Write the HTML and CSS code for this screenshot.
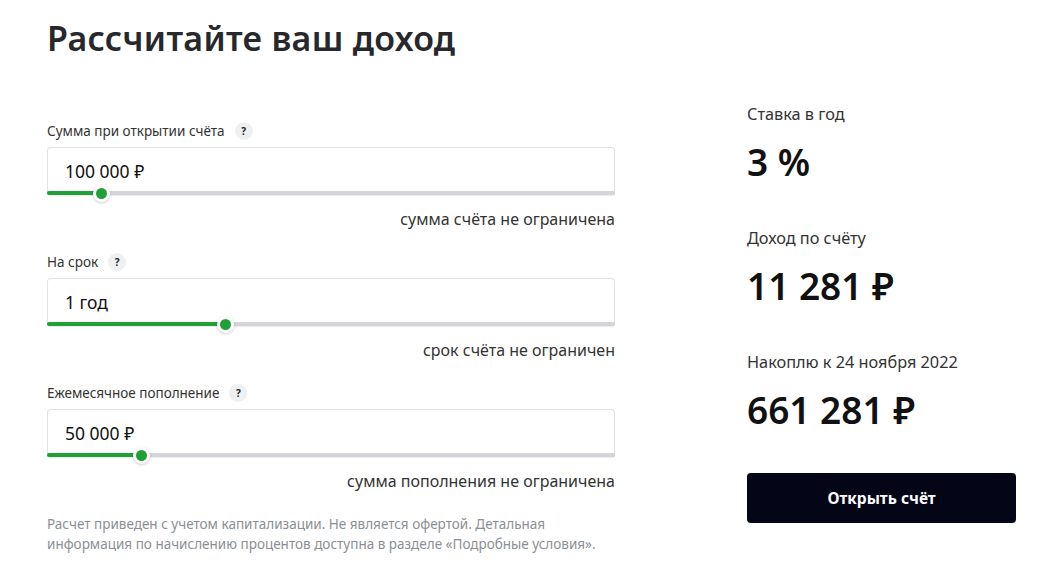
FILE: index.html
```html
<!DOCTYPE html>
<html lang="ru">
<head>
<meta charset="utf-8">
<title>Рассчитайте ваш доход</title>
<link rel="stylesheet" href="styles.css">
</head>
<body>
<div class="page">
  <h1 class="title">Рассчитайте ваш доход</h1>
  <div class="calc">
    <div class="inputs">
      <div class="field">
        <div class="label-row"><span class="label">Сумма при открытии счёта</span><span class="help">?</span></div>
        <div class="box">
          <div class="value">100 000 ₽</div>
          <div class="track"><div class="fill" style="width:9.5%"></div><div class="thumb" style="left:9.5%"></div></div>
        </div>
        <div class="hint">сумма счёта не ограничена</div>
      </div>
      <div class="field">
        <div class="label-row"><span class="label">На срок</span><span class="help">?</span></div>
        <div class="box">
          <div class="value">1 год</div>
          <div class="track"><div class="fill" style="width:31.3%"></div><div class="thumb" style="left:31.3%"></div></div>
        </div>
        <div class="hint">срок счёта не ограничен</div>
      </div>
      <div class="field">
        <div class="label-row"><span class="label">Ежемесячное пополнение</span><span class="help">?</span></div>
        <div class="box">
          <div class="value">50 000 ₽</div>
          <div class="track"><div class="fill" style="width:16.5%"></div><div class="thumb" style="left:16.5%"></div></div>
        </div>
        <div class="hint">сумма пополнения не ограничена</div>
      </div>
      <p class="note">Расчет приведен с учетом капитализации. Не является офертой. Детальная информация по начислению процентов доступна в разделе «Подробные условия».</p>
    </div>
    <div class="results">
      <div class="stat">
        <div class="stat-label">Ставка в год</div>
        <div class="stat-value">3 %</div>
      </div>
      <div class="stat">
        <div class="stat-label">Доход по счёту</div>
        <div class="stat-value">11 281 ₽</div>
      </div>
      <div class="stat">
        <div class="stat-label">Накоплю к 24 ноября 2022</div>
        <div class="stat-value">661 281 ₽</div>
      </div>
      <button class="open-btn">Открыть счёт</button>
    </div>
  </div>
</div>
</body>
</html>
```
FILE: styles.css
```css
html, body {
  margin: 0;
  padding: 0;
  background: #ffffff;
}
body {
  font-family: "Noto Sans", "Open Sans", sans-serif;
  color: #222;
}
.page {
  padding: 18px 0 0 47px;
}
.title {
  margin: 0;
  font-size: 34px;
  line-height: 40px;
  font-weight: 600;
  color: #26282c;
  letter-spacing: 0.3px;
}
.calc {
  display: grid;
  grid-template-columns: 568px 269px;
  column-gap: 132px;
  margin-top: 45px;
}
.inputs {
  padding-top: 18px;
}
.field {
  margin-bottom: 23px;
}
.label-row {
  display: flex;
  align-items: center;
  gap: 10px;
  height: 20px;
}
.label {
  font-size: 13.5px;
  color: #333;
}
.help {
  width: 18px;
  height: 18px;
  border-radius: 50%;
  background: #eff0f2;
  color: #222;
  font-size: 10px;
  font-weight: 700;
  display: flex;
  align-items: center;
  justify-content: center;
}
.box {
  margin-top: 6px;
  border: 1px solid #e1e3e6;
  border-bottom: none;
  border-radius: 4px 4px 2px 2px;
  display: flex;
  flex-direction: column;
}
.value {
  height: 43px;
  padding-left: 17px;
  display: flex;
  align-items: center;
  font-size: 17.5px;
  color: #111;
  padding-top: 3px;
  box-sizing: border-box;
}
.track {
  position: relative;
  height: 4px;
  margin: 0 -1px;
  background: #d3d5d8;
  border-radius: 2px;
  box-shadow: 0 1px 1px rgba(0,0,0,0.08);
}
.fill {
  height: 100%;
  background: #21a038;
  border-radius: 2px 0 0 2px;
}
.thumb {
  position: absolute;
  top: 50%;
  width: 11px;
  height: 11px;
  margin: -8px 0 0 -8px;
  border-radius: 50%;
  background: #21a038;
  border: 3px solid #fff;
  box-shadow: 0 1px 3px rgba(0,0,0,0.2);
}
.hint {
  margin-top: 14px;
  text-align: right;
  font-size: 16px;
  line-height: 20px;
  color: #333;
}
.note {
  margin: 0;
  max-width: 560px;
  font-size: 13.5px;
  line-height: 20px;
  color: #8b8f95;
}
.results {
  padding-top: 0;
}
.stat {
  margin-bottom: 45px;
}
.stat-label {
  font-size: 16.3px;
  line-height: 22px;
  color: #333;
}
.stat-value {
  margin-top: 17px;
  font-size: 37px;
  line-height: 40px;
  font-weight: 600;
  color: #111;
}
.open-btn {
  display: block;
  width: 269px;
  height: 50px;
  margin-top: -2px;
  border: none;
  border-radius: 4px;
  background: #050518;
  color: #fff;
  font-family: inherit;
  font-size: 15.5px;
  font-weight: 700;
  cursor: pointer;
}
```
